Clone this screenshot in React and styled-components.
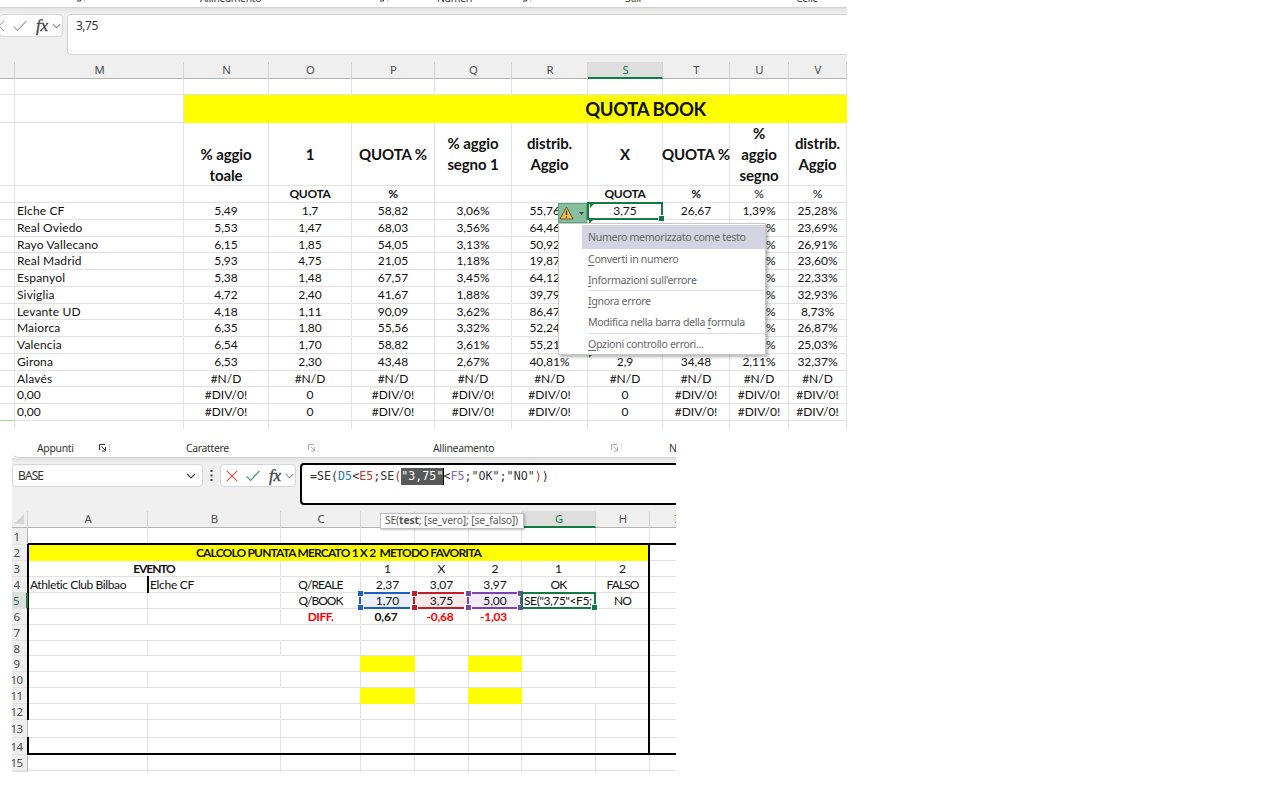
import React from 'react'
import styled, { createGlobalStyle, css } from 'styled-components'

const GlobalStyle = createGlobalStyle`
*{
box-sizing:border-box;
}
body{
margin:0;
background-color:white;
}
`
const grid = '#e1e1e1'
const green = '#107c41'
const ui = '"Noto Sans", "Open Sans", sans-serif'
const calc = 'Lato, "Liberation Sans", sans-serif'

const Page = styled.div`
width:1280px;
height:787px;
overflow:hidden;
background-color:white;
`
const TopWindow = styled.section`
position:relative;
width:847px;
height:429px;
overflow:hidden;
`
const BottomWindow = styled.section`
width:664px;
height:332px;
margin:11px 0 0 12px;
overflow:hidden;
`
const Ribbon = styled.div`
position:relative;
height:${props => props.$h}px;
background-color:white;
border-bottom:1px solid #d2d2d2;
border-bottom-left-radius:${props => props.$round ? 6 : 0}px;
overflow:hidden;
`
const GroupName = styled.span`
position:absolute;
left:${props => props.$x}px;
bottom:${props => props.$bottom}px;
font-family:${ui};
font-size:10.4px;
line-height:14px;
letter-spacing:-0.3px;
color:#333;
white-space:nowrap;
`
const Launcher = styled.svg`
position:absolute;
left:${props => props.$x}px;
bottom:${props => props.$bottom}px;
opacity:${props => props.$dim ? 0.4 : 1};
`
const Bar = styled.div`
display:flex;
align-items:flex-start;
height:${props => props.$h}px;
padding-top:${props => props.$top}px;
background:linear-gradient(#e2e2e2, #efefef 5px);
`
const NameBox = styled.div`
display:flex;
align-items:center;
justify-content:space-between;
width:191px;
height:23px;
padding:0 6px 0 5px;
border:1px solid #d6d6d6;
border-radius:4px;
background-color:white;
font-family:${ui};
font-size:12px;
letter-spacing:-0.9px;
color:#333;
`
const Dots = styled.svg`
margin:6px 6px 0 6px;
`
const Tools = styled.div`
display:flex;
align-items:center;
flex:none;
width:${props => props.$w}px;
height:23px;
margin-left:${props => props.$ml || 0}px;
border:1px solid #d6d6d6;
border-radius:4px;
background-color:white;
`
const Formula = styled.div`
flex:1;
height:41px;
margin-left:4px;
padding:3px 8px;
border:1px solid #d0d0d0;
border-right:0;
border-radius:4px 0 0 4px;
background-color:white;
font-family:${ui};
font-size:12px;
line-height:16px;
letter-spacing:-0.5px;
color:#333;
white-space:pre;
${props => props.$editing && css`
border:2px solid black;
border-right:0;
font-family:"DejaVu Sans Mono", monospace;
font-size:11.63px;
letter-spacing:0.02px;
padding:3px 8px;
height:42px;
margin-top:-1px;
`}
`
const Ref = styled.span`
color:${props => props.$c};
`
const Picked = styled.span`
display:inline-block;
height:17px;
background-color:#595959;
color:white;
border-right:1px solid black;
margin-right:-1px;
`
const Line = styled.div`
display:flex;
height:${props => props.$h}px;
`
const Head = styled.div`
position:relative;
flex:none;
width:${props => props.$w}px;
height:100%;
display:flex;
align-items:center;
justify-content:center;
padding-left:1px;
border-bottom:${props => props.$on ? `2px solid ${green}` : '1px solid #b5b5b5'};
background-color:${props => props.$on ? '#dedede' : '#efefef'};
border-right:1px solid #d4d4d4;
font-family:${ui};
font-size:11.3px;
line-height:14px;
color:${props => props.$on ? green : '#4c4c4c'};
`
const RowHead = styled.div`
position:relative;
flex:none;
width:16px;
height:100%;
display:flex;
align-items:center;
justify-content:center;
background-color:${props => props.$on ? '#dedede' : '#efefef'};
border-bottom:1px solid ${grid};
border-right:${props => props.$on ? `2px solid ${green}` : '1px solid #b5b5b5'};
font-family:${ui};
font-size:11.5px;
letter-spacing:-0.5px;
padding-right:6px;
color:${props => props.$on ? green : '#4c4c4c'};
${props => props.$black && css`
&::after{
content:"";
position:absolute;
right:${props.$on ? -3 : -2}px;
top:-1px;
bottom:-1px;
width:${props.$on ? 1 : 2}px;
background-color:black;
z-index:1;
}
`}
`
const Cell = styled.div`
position:relative;
flex:none;
width:${props => props.$w}px;
height:100%;
display:flex;
align-items:center;
justify-content:${props => props.$left ? 'flex-start' : 'center'};
padding:${props => props.$left ? '0 0 1px 2px' : props.$fs ? '0' : '0 0 1px 0'};
border-right:1px solid ${props => props.$bg || grid};
border-bottom:1px solid ${props => props.$line || props.$bg || grid};
background-color:${props => props.$bg || 'white'};
color:${props => props.$c || '#111'};
font-family:${calc};
font-size:${props => props.$fs || 12}px;
font-weight:${props => props.$b ? 700 : 400};
line-height:${props => props.$lh || '15px'};
letter-spacing:${props => props.$ls || 0}px;
text-align:center;
white-space:pre;
${props => props.$low && css`padding-top:22px;`}
${props => props.$shift && css`padding-right:${props.$shift}px;`}
${props => props.$fill && css`box-shadow:-1px 0 0 ${props.$bg};`}
${props => props.$bottomBlack && css`
height:calc(100% - 2px);
border-bottom:0;
box-shadow:0 2px 0 black;
`}
${props => props.$rightBlack && css`
&::after{
content:"";
position:absolute;
right:-1px;
top:-1px;
bottom:-1px;
width:2px;
background-color:black;
z-index:1;
}
`}
${props => props.$leftBlack && css`
&::before{
content:"";
position:absolute;
left:-1px;
top:-1px;
bottom:-1px;
width:2px;
background-color:black;
}
`}
`
const Flag = styled.i`
position:absolute;
left:${props => props.$in ? 2 : 1}px;
top:${props => props.$in ? 1 : 0}px;
border-top:4px solid #128a12;
border-right:4px solid transparent;
`
const Selection = styled.div`
position:absolute;
inset:-1px;
left:${props => props.$range ? -2 : -1}px;
border:2px solid ${props => props.$c};
z-index:2;
`
const Handle = styled.i`
position:absolute;
width:5px;
height:5px;
background-color:${props => props.$c};
left:${props => props.$r ? 'auto' : '-3px'};
right:${props => props.$r ? '-3px' : 'auto'};
top:${props => props.$d ? 'auto' : '-3px'};
bottom:${props => props.$d ? '-3px' : 'auto'};
box-shadow:0 0 0 1px white;
`
const ErrorButton = styled.div`
position:absolute;
left:558px;
top:203px;
width:29px;
height:20px;
display:flex;
align-items:center;
gap:5px;
border:1px solid #5fa07d;
background-color:#86bfa0;
z-index:4;
`
const Menu = styled.div`
position:absolute;
left:558px;
top:223px;
width:208px;
height:132px;
padding-top:1px;
border:1px solid #c9c9c9;
background-color:white;
box-shadow:2px 2px 3px rgba(0,0,0,.3);
z-index:3;
`
const Item = styled.div`
display:flex;
align-items:center;
height:${props => props.$h || 20}px;
margin-left:${props => props.$title ? 23 : 29}px;
padding-left:${props => props.$title ? 6 : 0}px;
padding-bottom:1px;
background-color:${props => props.$title ? '#d3d3e1' : 'transparent'};
border-top:${props => props.$sep ? '1px solid #dfe1e8' : '0'};
font-family:${ui};
font-size:10.6px;
letter-spacing:-0.33px;
white-space:pre;
color:#666;
`
const Key = styled.u`
text-underline-offset:2px;
`
const HeadWrap = styled.div`
position:relative;
display:flex;
height:17px;
background-color:#efefef;
`
const Corner = styled.div`
flex:none;
width:16px;
height:17px;
display:flex;
align-items:flex-end;
justify-content:flex-end;
padding:0 3px 3px 0;
border-right:1px solid #d4d4d4;
border-bottom:1px solid #b5b5b5;
`
const Hint = styled.div`
position:absolute;
left:368px;
top:2px;
width:144px;
height:16px;
padding-left:4px;
border:1px solid #bdbdbd;
background-color:white;
box-shadow:1px 1px 2px rgba(0,0,0,.25);
font-family:${ui};
font-size:10.4px;
line-height:13px;
letter-spacing:-0.18px;
color:#555;
white-space:pre;
z-index:5;
`

const Chevron = ({ color = '#444', size = 10 }) => (
  <svg width={size} height="6" viewBox="0 0 10 6" fill="none" stroke={color} strokeWidth="1.2"><path d="M1 1l4 4 4-4" /></svg>
)
const Tick = ({ color }) => (
  <svg width="14" height="12" viewBox="0 0 14 12" fill="none" stroke={color} strokeWidth="1.2"><path d="M.6 6.5l4 4L13.4 1" /></svg>
)
const Cross = ({ color }) => (
  <svg width="12" height="12" viewBox="0 0 12 12" fill="none" stroke={color} strokeWidth="1.2"><path d="M.8.8l10.4 10.4M11.2.8L.8 11.2" /></svg>
)
const FxText = styled.span`
width:13px;
font-family:"Liberation Serif", serif;
font-style:italic;
font-size:17px;
line-height:18px;
letter-spacing:-0.3px;
-webkit-text-stroke:0.35px #444;
color:#444;
`
const Space = styled.span`
width:${props => props.$w}px;
flex:none;
`
const LauncherIcon = ({ x, bottom, dim }) => (
  <Launcher $x={x} $bottom={bottom} $dim={dim} width="12" height="8" viewBox="0 0 12 8" fill="none" stroke="#333">
    <path d="M.5 6V.5H6M2.500 2.500l4 4M6.500 3v4H3" />
    <path d="M10.500 0v8" stroke="#ccc" />
  </Launcher>
)

const cols = [
  ['M', 169], ['N', 85], ['O', 83], ['P', 83], ['Q', 77], ['R', 76], ['S', 75], ['T', 67], ['U', 59], ['V', 58],
]
const titles = ['', '% aggio\ntoale', '1', 'QUOTA %', '% aggio\nsegno 1', 'distrib.\nAggio', 'X', 'QUOTA %', '%\naggio\nsegno', 'distrib.\nAggio']
const units = ['', '', 'QUOTA', '%', '', '', 'QUOTA', '%', '%', '%']
// first value is the row height
const teams = [
  [17, 'Elche CF', '5,49', '1,7', '58,82', '3,06%', '55,76%', '3,75', '26,67', '1,39%', '25,28%'],
  [17, 'Real Oviedo', '5,53', '1,47', '68,03', '3,56%', '64,46%', '', '', '1,31%', '23,69%'],
  [16, 'Rayo Vallecano', '6,15', '1,85', '54,05', '3,13%', '50,92%', '', '', '1,66%', '26,91%'],
  [17, 'Real Madrid', '5,93', '4,75', '21,05', '1,18%', '19,87%', '', '', '1,40%', '23,60%'],
  [17, 'Espanyol', '5,38', '1,48', '67,57', '3,45%', '64,12%', '', '', '1,20%', '22,33%'],
  [17, 'Siviglia', '4,72', '2,40', '41,67', '1,88%', '39,79%', '', '', '1,55%', '32,93%'],
  [16, 'Levante UD', '4,18', '1,11', '90,09', '3,62%', '86,47%', '', '', '0,37%', '8,73%'],
  [17, 'Maiorca', '6,35', '1,80', '55,56', '3,32%', '52,24%', '', '', '1,71%', '26,87%'],
  [17, 'Valencia', '6,54', '1,70', '58,82', '3,61%', '55,21%', '', '', '1,64%', '25,03%'],
  [17, 'Girona', '6,53', '2,30', '43,48', '2,67%', '40,81%', '2,9', '34,48', '2,11%', '32,37%'],
  [16, 'Alavés', '#N/D', '#N/D', '#N/D', '#N/D', '#N/D', '#N/D', '#N/D', '#N/D', '#N/D'],
  [17, '0,00', '#DIV/0!', '0', '#DIV/0!', '#DIV/0!', '#DIV/0!', '0', '#DIV/0!', '#DIV/0!', '#DIV/0!'],
  [17, '0,00', '#DIV/0!', '0', '#DIV/0!', '#DIV/0!', '#DIV/0!', '0', '#DIV/0!', '#DIV/0!', '#DIV/0!'],
]

const QuoteSheet = () => (
  <TopWindow>
    <Ribbon $h={8}>
      <LauncherIcon x={74} bottom={5} />
      <GroupName $x={200} $bottom={2}>Allineamento</GroupName>
      <LauncherIcon x={377} bottom={5} />
      <GroupName $x={437} $bottom={2}>Numeri</GroupName>
      <LauncherIcon x={520} bottom={5} />
      <GroupName $x={625} $bottom={2}>Stili</GroupName>
      <GroupName $x={796} $bottom={2}>Celle</GroupName>
    </Ribbon>
    <Bar $h={54} $top={6}>
      <Tools $w={64} $ml={-1}>
        <svg width="5" height="12" viewBox="0 0 5 12" fill="none" stroke="#aaa" strokeWidth="1.2"><path d="M4.200.800L-1 6l5.200 5.200" /></svg>
        <Space $w={8} />
        <Tick color="#aaa" />
        <Space $w={9} />
        <FxText>fx</FxText>
        <Space $w={3} />
        <Chevron color="#888" size={9} />
      </Tools>
      <Formula>3,75</Formula>
    </Bar>
    <Line $h={17}>
      <Head $w={15} />
      {cols.map(([name, w]) => <Head key={name} $w={w} $on={name === 'S'}>{name}</Head>)}
    </Line>
    <Line $h={16}>
      <Cell $w={15} />
      {cols.map(([name, w]) => <Cell key={name} $w={w} />)}
    </Line>
    <Line $h={28}>
      <Cell $w={15} />
      <Cell $w={169} />
      <Cell $w={924} $bg="#ffff00" $b $fs={18.5} $lh="22px" $ls={-0.4}>QUOTA BOOK</Cell>
    </Line>
    <Line $h={63}>
      <Cell $w={15} />
      {cols.map(([name, w], i) => (
        <Cell key={name} $w={w} $b $fs={15} $lh="21px" $ls={-0.1} $low={name === 'N'}>{titles[i]}</Cell>
      ))}
    </Line>
    <Line $h={17}>
      <Cell $w={15} />
      {cols.map(([name, w], i) => <Cell key={name} $w={w} $b={i < 8} $ls={i < 8 ? -0.3 : 0}>{units[i]}</Cell>)}
    </Line>
    {teams.map(([h, ...vals], r) => (
      <Line key={r} $h={h}>
        <Cell $w={15} $line={r === 12 ? '#a9d08e' : undefined} />
        {vals.map((v, i) => (
          <Cell key={i} $w={cols[i][1]} $left={i === 0} $ls={i === 0 && r < 11 ? 0.15 : 0}>
            {v}
            {i === 6 && r < 10 && <Flag $in={r === 0} />}
            {i === 6 && r === 0 && <Selection $c={green}><Handle $c={green} $r $d /></Selection>}
          </Cell>
        ))}
      </Line>
    ))}
    <Line $h={9}>
      <Cell $w={15} />
      {cols.map(([name, w]) => <Cell key={name} $w={w} />)}
    </Line>
    <ErrorButton>
      <svg width="15" height="14" viewBox="0 0 15 14"><path d="M7.500 1L14 13H1z" fill="#f3c04f" stroke="#6b5422" /><path d="M7.500 4.500v4.500M7.500 10.300v1.400" stroke="#333" strokeWidth="1.300" /></svg>
      <svg width="5" height="3" viewBox="0 0 5 3"><path d="M0 0h5L2.500 3z" fill="#444" /></svg>
    </ErrorButton>
    <Menu>
      <Item $title $h={24}>Numero memorizzato come testo</Item>
      <Item $h={21}><Key>C</Key>onverti in numero</Item>
      <Item><Key>I</Key>nformazioni sull'errore</Item>
      <Item $sep $h={22}><Key>I</Key>gnora errore</Item>
      <Item $h={21}>Modifica nella barra della <Key>f</Key>ormula</Item>
      <Item $sep $h={21}><Key>O</Key>pzioni controllo errori...</Item>
    </Menu>
  </TopWindow>
)

const letters = [['A', 120], ['B', 133], ['C', 80], ['', 54], ['', 54], ['', 53], ['G', 74], ['H', 54], ['I', 53]]

const Range = ({ c }) => (
  <Selection $c={c} $range>
    <Handle $c={c} />
    <Handle $c={c} $r />
    <Handle $c={c} $d />
    <Handle $c={c} $r $d />
  </Selection>
)

const plain = [[120], [133], [80], [54], [54], [53], [74], [54], [60]]
const yellow = { $bg: '#ffff00', $fill: true }
const red = { $b: true, $c: 'red', $ls: -0.2 }

// each row: number, height, cells as [width, text, extra props]
const rows = [
  [1, 17, plain],
  [2, 16, [[622, 'CALCOLO PUNTATA MERCATO 1 X 2  METODO FAVORITA', { $bg: '#ffff00', $b: true, $ls: -0.83 }], [60]]],
  [3, 16, [[253, 'EVENTO', { $b: true, $ls: -1.1 }], [80], [54, '1'], [54, 'X'], [53, '2'], [74, '1'], [54, '2'], [60]]],
  [4, 16, [[120, 'Athletic Club Bilbao', { $left: true, $ls: -0.4 }], [133, 'Elche CF', { $left: true, $leftBlack: true, $ls: -0.3 }], [80, 'Q/REALE', { $ls: -0.9 }], [54, '2,37'], [54, '3,07'], [53, '3,97'], [74, 'OK', { $ls: -0.9 }], [54, 'FALSO', { $ls: -0.9 }], [60]]],
  [5, 16, [[120], [133], [80, 'Q/BOOK', { $ls: -1 }], [54, '1,70', { $bg: '#e9eff8', range: '#1f5fc4' }], [54, '3,75', { $bg: '#f8e9e9', range: '#bd1f2d' }], [53, '5,00', { $bg: '#f0ebf7', range: '#7a44b5' }], [74, 'SE("3,75"<F5;', { edit: true, $left: true, $ls: -0.4 }], [54, 'NO', { $ls: -0.9 }], [60]]],
  [6, 16, [[120], [133], [80, 'DIFF.', { ...red, $ls: -0.5 }], [54, '0,67', { $b: true, $ls: -0.2, $shift: 3 }], [54, '-0,68', { ...red, $shift: 3 }], [53, '-1,03', { ...red, $shift: 3 }], [74], [54], [60]]],
  [7, 16, [[333], [54], [54], [53], [74], [54], [60]]],
  [8, 15, plain],
  [9, 16, [[333], [54, '', yellow], [54], [53, '', yellow], [128], [60]]],
  [10, 16, plain],
  [11, 16, [[333], [54, '', yellow], [54], [53, '', yellow], [128], [60]]],
  [12, 16, plain],
  [13, 18, plain],
  [14, 17, plain],
  [15, 16, plain],
  ['', 1, plain],
]

const CalcSheet = () => (
  <BottomWindow>
    <Ribbon $h={18} $round>
      <GroupName $x={25} $bottom={2}>Appunti</GroupName>
      <LauncherIcon x={87} bottom={5} />
      <GroupName $x={174} $bottom={2}>Carattere</GroupName>
      <LauncherIcon x={296} bottom={5} dim />
      <GroupName $x={421} $bottom={2}>Allineamento</GroupName>
      <LauncherIcon x={599} bottom={5} dim />
      <GroupName $x={657} $bottom={2}>Numeri</GroupName>
    </Ribbon>
    <Bar $h={53} $top={6}>
      <NameBox>BASE<Chevron /></NameBox>
      <Dots width="5" height="12" viewBox="0 0 5 12" fill="#444"><path d="M1.500 0h2v2h-2zM1.500 4.500h2v2h-2zM1.500 9h2v2h-2z" /></Dots>
      <Tools $w={76}>
        <Space $w={5} />
        <Cross color="#e8524a" />
        <Space $w={8} />
        <Tick color="#4a9e62" />
        <Space $w={9} />
        <FxText>fx</FxText>
        <Space $w={3} />
        <Chevron color="#888" size={9} />
      </Tools>
      <Formula $editing>
        =SE(<Ref $c="#2e75b6">D5</Ref>&lt;<Ref $c="#c0392b">E5</Ref>;SE<Ref $c="#c0392b">(</Ref><Picked>"3,75"</Picked>&lt;<Ref $c="#8064b0">F5</Ref>;"OK";"NO"<Ref $c="#c0392b">)</Ref>)
      </Formula>
    </Bar>
    <HeadWrap>
      <Corner><svg width="10" height="10" viewBox="0 0 10 10"><path d="M10 0v10H0z" fill="#d6d6d6" /></svg></Corner>
      {letters.map(([name, w], i) => <Head key={i} $w={w} $on={name === 'G'}>{name}</Head>)}
      <Hint>SE(<b>test</b>; [se_vero]; [se_falso])</Hint>
    </HeadWrap>
    {rows.map(([n, h, cells]) => (
      <Line key={n} $h={h}>
        <RowHead $on={n === 5} $black={n > 1 && n < 15 && n !== 13}>{n}</RowHead>
        {cells.map(([w, text, extra = {}], i) => {
          const { range, edit, ...rest } = extra
          return (
            <Cell
              key={i}
              $w={w}
              $rightBlack={n > 1 && n < 15 && i === cells.length - 2}
              $bottomBlack={n === 1 || n === 14}
              {...rest}
            >
              {text}
              {range && <Range c={range} />}
              {edit && <Selection $c={green}><Handle $c={green} $r $d /></Selection>}
            </Cell>
          )
        })}
      </Line>
    ))}
  </BottomWindow>
)

const App = () => {
  return (
    <Page>
      <GlobalStyle />
      <QuoteSheet />
      <CalcSheet />
    </Page>
  )
}

export default App
